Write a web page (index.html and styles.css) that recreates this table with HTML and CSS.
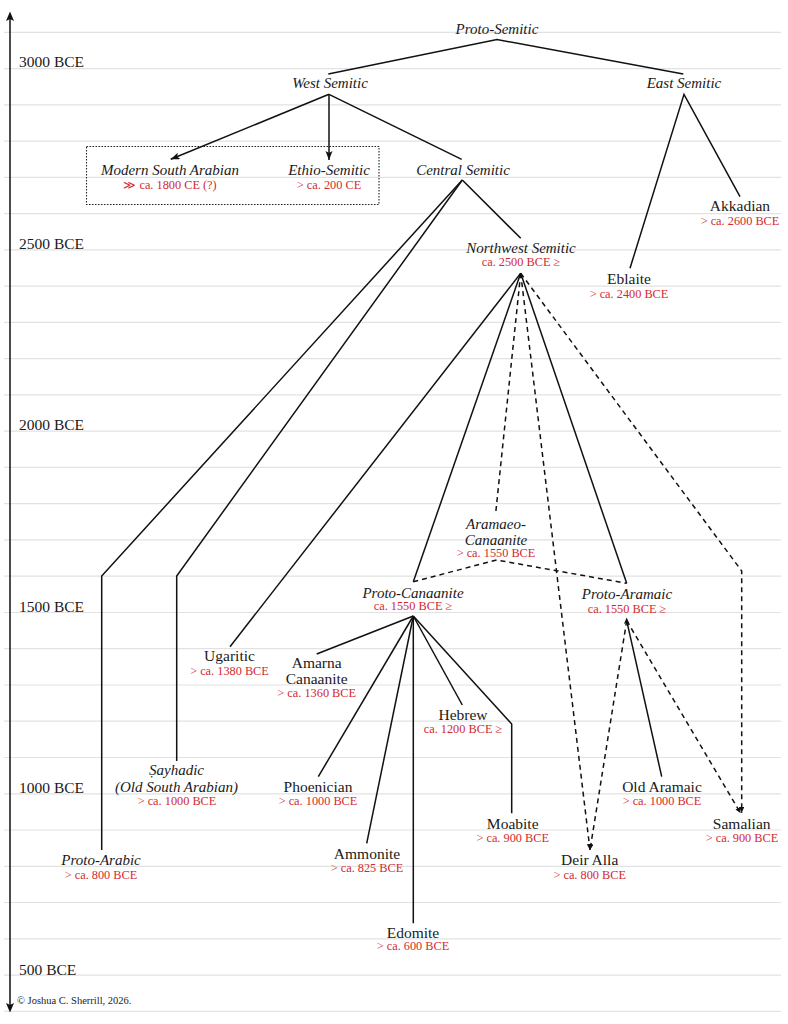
FILE: index.html
```html
<!DOCTYPE html>
<html lang="en">
<head>
<meta charset="utf-8">
<title>Semitic languages timeline</title>
<link rel="stylesheet" href="styles.css">
</head>
<body>
<div class="chart">
<svg class="tree" width="788" height="1024" viewBox="0 0 788 1024" xmlns="http://www.w3.org/2000/svg">
  <defs>
    <marker id="arr" markerUnits="userSpaceOnUse" markerWidth="10" markerHeight="8" refX="9" refY="3.5" orient="auto">
      <path class="head" d="M0,0 L9,3.5 L0,7 L2,3.5 z"/>
    </marker>
    <marker id="tip" markerUnits="userSpaceOnUse" markerWidth="7" markerHeight="6" refX="6" refY="2.5" orient="auto">
      <path class="head" d="M0,0 L6,2.5 L0,5 z"/>
    </marker>
  </defs>

  <g class="grid">
    <line x1="4" y1="32.3" x2="781" y2="32.3"/>
    <line x1="4" y1="68.6" x2="781" y2="68.6"/>
    <line x1="4" y1="104.8" x2="781" y2="104.8"/>
    <line x1="4" y1="141.1" x2="781" y2="141.1"/>
    <line x1="4" y1="177.3" x2="781" y2="177.3"/>
    <line x1="4" y1="213.6" x2="781" y2="213.6"/>
    <line x1="4" y1="249.9" x2="781" y2="249.9"/>
    <line x1="4" y1="286.1" x2="781" y2="286.1"/>
    <line x1="4" y1="322.4" x2="781" y2="322.4"/>
    <line x1="4" y1="358.6" x2="781" y2="358.6"/>
    <line x1="4" y1="394.9" x2="781" y2="394.9"/>
    <line x1="4" y1="431.2" x2="781" y2="431.2"/>
    <line x1="4" y1="467.4" x2="781" y2="467.4"/>
    <line x1="4" y1="503.7" x2="781" y2="503.7"/>
    <line x1="4" y1="539.9" x2="781" y2="539.9"/>
    <line x1="4" y1="576.2" x2="781" y2="576.2"/>
    <line x1="4" y1="612.5" x2="781" y2="612.5"/>
    <line x1="4" y1="648.7" x2="781" y2="648.7"/>
    <line x1="4" y1="685.0" x2="781" y2="685.0"/>
    <line x1="4" y1="721.2" x2="781" y2="721.2"/>
    <line x1="4" y1="757.5" x2="781" y2="757.5"/>
    <line x1="4" y1="793.8" x2="781" y2="793.8"/>
    <line x1="4" y1="830.0" x2="781" y2="830.0"/>
    <line x1="4" y1="866.3" x2="781" y2="866.3"/>
    <line x1="4" y1="902.5" x2="781" y2="902.5"/>
    <line x1="4" y1="938.8" x2="781" y2="938.8"/>
    <line x1="4" y1="975.1" x2="781" y2="975.1"/>
    <line x1="4" y1="1011.3" x2="781" y2="1011.3"/>
  </g>

  <g class="axis">
    <line class="edge" x1="10" y1="18" x2="10" y2="1005"/>
    <path class="head" d="M10,11.5 L14,21 L10,19 L6,21 z"/>
    <path class="head" d="M10,1012.5 L14,1003 L10,1005 L6,1003 z"/>
  </g>

  <g class="years">
    <text class="yr" x="19" y="67">3000 BCE</text>
    <text class="yr" x="19" y="248.5">2500 BCE</text>
    <text class="yr" x="19" y="429.5">2000 BCE</text>
    <text class="yr" x="19" y="611.5">1500 BCE</text>
    <text class="yr" x="19" y="793">1000 BCE</text>
    <text class="yr" x="19" y="974.5">500 BCE</text>
  </g>

  <rect class="box" x="86.5" y="146.5" width="292.5" height="58"/>

  <g class="edges">
    <polyline class="edge" points="328.3,74 497,39.5 683.3,74"/>
    <line class="edge" x1="329" y1="94.3" x2="170.7" y2="159.3" marker-end="url(#arr)"/>
    <line class="edge" x1="329" y1="94.3" x2="329" y2="160" marker-end="url(#arr)"/>
    <line class="edge" x1="329" y1="94.3" x2="461.7" y2="159.3"/>
    <polyline class="edge" points="740,196.7 684,94.3 630,268.3"/>
    <line class="edge" x1="462.3" y1="180" x2="520.7" y2="238.3"/>
    <polyline class="edge" points="462.3,180 101.7,576 101.7,850"/>
    <polyline class="edge" points="462.3,180 176.7,576 176.7,761"/>

    <line class="edge" x1="520.7" y1="273.3" x2="230" y2="646.7"/>
    <line class="edge" x1="520.7" y1="273.3" x2="413.3" y2="581.7"/>
    <line class="edge" x1="520.7" y1="273.3" x2="626.7" y2="583.3"/>
    <line class="edge dash" x1="520.7" y1="273.3" x2="495.7" y2="513"/>
    <line class="edge dash" x1="520.7" y1="273.3" x2="590" y2="850" marker-end="url(#tip)"/>
    <polyline class="edge dash" points="520.7,273.3 741.7,571 741.7,813" marker-end="url(#tip)"/>

    <polyline class="edge dash" points="413.3,581.7 496.7,560 626.7,583.3"/>

    <line class="edge" x1="413.3" y1="616" x2="316.7" y2="654"/>
    <line class="edge" x1="413.3" y1="616" x2="318.3" y2="776.7"/>
    <line class="edge" x1="413.3" y1="616" x2="366.7" y2="843.3"/>
    <line class="edge" x1="413.3" y1="616" x2="413.3" y2="923.3"/>
    <line class="edge" x1="413.3" y1="616" x2="462.3" y2="705"/>
    <polyline class="edge" points="413.3,616 511.7,724 511.7,813.3"/>

    <line class="edge" x1="626.7" y1="620.7" x2="661.7" y2="776.7"/>
    <line class="edge dash" x1="626.7" y1="620.7" x2="590" y2="850" marker-end="url(#tip)"/>
    <line class="edge dash" x1="626.7" y1="620.7" x2="740.7" y2="813.3" marker-end="url(#tip)"/>
    <path class="head" d="M626.7,617.5 L629.5,624 L626.7,622.5 L623.9,624 z"/>
  </g>

  <g class="labels">
    <text class="proto" x="497" y="34">Proto-Semitic</text>
    <text class="proto" x="330" y="88">West Semitic</text>
    <text class="proto" x="684" y="88">East Semitic</text>

    <text class="proto" x="170" y="175">Modern South Arabian</text>
    <text class="date" x="170" y="188.5">≫ ca. 1800 CE (?)</text>
    <text class="proto" x="329" y="175">Ethio-Semitic</text>
    <text class="date" x="329" y="188.5">&gt; ca. 200 CE</text>
    <text class="proto" x="463" y="174.5">Central Semitic</text>

    <text class="lang" x="740" y="211">Akkadian</text>
    <text class="date" x="740" y="224.5">&gt; ca. 2600 BCE</text>

    <text class="proto" x="521" y="253">Northwest Semitic</text>
    <text class="date" x="521" y="266">ca. 2500 BCE ≥</text>

    <text class="lang" x="629" y="284">Eblaite</text>
    <text class="date" x="629" y="297.5">&gt; ca. 2400 BCE</text>

    <text class="proto" x="496" y="529">Aramaeo-</text>
    <text class="proto" x="496" y="544.5">Canaanite</text>
    <text class="date" x="496" y="557">&gt; ca. 1550 BCE</text>

    <text class="proto" x="413" y="598">Proto-Canaanite</text>
    <text class="date" x="413" y="610">ca. 1550 BCE ≥</text>

    <text class="proto" x="627" y="599">Proto-Aramaic</text>
    <text class="date" x="627" y="612.5">ca. 1550 BCE ≥</text>

    <text class="lang" x="229.5" y="661">Ugaritic</text>
    <text class="date" x="229.5" y="674.5">&gt; ca. 1380 BCE</text>

    <text class="lang" x="316.7" y="667.5">Amarna</text>
    <text class="lang" x="316.7" y="683.5">Canaanite</text>
    <text class="date" x="316.7" y="697">&gt; ca. 1360 BCE</text>

    <text class="lang" x="463" y="720">Hebrew</text>
    <text class="date" x="463" y="732.5">ca. 1200 BCE ≥</text>

    <text class="proto" x="176.5" y="774.5">Ṣayhadic</text>
    <text class="proto" x="176.5" y="791.5">(Old South Arabian)</text>
    <text class="date" x="177" y="805">&gt; ca. 1000 BCE</text>

    <text class="lang" x="318" y="792">Phoenician</text>
    <text class="date" x="318" y="804.5">&gt; ca. 1000 BCE</text>

    <text class="lang" x="662" y="792">Old Aramaic</text>
    <text class="date" x="662" y="805">&gt; ca. 1000 BCE</text>

    <text class="lang" x="512.7" y="828.5">Moabite</text>
    <text class="date" x="512.7" y="841.5">&gt; ca. 900 BCE</text>

    <text class="lang" x="741.7" y="829">Samalian</text>
    <text class="date" x="742" y="841.5">&gt; ca. 900 BCE</text>

    <text class="lang" x="367" y="858.5">Ammonite</text>
    <text class="date" x="367" y="871.5">&gt; ca. 825 BCE</text>

    <text class="proto" x="101" y="865">Proto-Arabic</text>
    <text class="date" x="101" y="878.5">&gt; ca. 800 BCE</text>

    <text class="lang" x="589.7" y="865">Deir Alla</text>
    <text class="date" x="589.7" y="878.5">&gt; ca. 800 BCE</text>

    <text class="lang" x="413" y="937.5">Edomite</text>
    <text class="date" x="413" y="950">&gt; ca. 600 BCE</text>
  </g>

  <text class="copy" x="17" y="1004">© Joshua C. Sherrill, 2026.</text>
</svg>
</div>
</body>
</html>
```

FILE: styles.css
```css
html, body {
  margin: 0;
  padding: 0;
  background: #ffffff;
}

.chart {
  width: 788px;
  height: 1024px;
  overflow: hidden;
}

.tree {
  display: block;
  font-family: "Liberation Serif", "Times New Roman", serif;
}

.grid line {
  stroke: #e2e2e2;
  stroke-width: 1.2;
}

.edge {
  stroke: #111111;
  stroke-width: 1.5;
  fill: none;
}

.dash {
  stroke-dasharray: 5 4;
}

.head {
  fill: #111111;
  stroke: none;
}

.box {
  fill: none;
  stroke: #222222;
  stroke-width: 1.1;
  stroke-dasharray: 1.6 1.4;
}

.yr {
  font-size: 15.5px;
  fill: #1a1a1a;
}

.lang {
  font-size: 15.5px;
  fill: #1a1a1a;
  text-anchor: middle;
}

.proto {
  font-size: 15px;
  font-style: italic;
  fill: #1a1a1a;
  text-anchor: middle;
}

.date {
  font-size: 12.3px;
  fill: #d22a30;
  text-anchor: middle;
}

.copy {
  font-size: 10.5px;
  fill: #222222;
}
```
